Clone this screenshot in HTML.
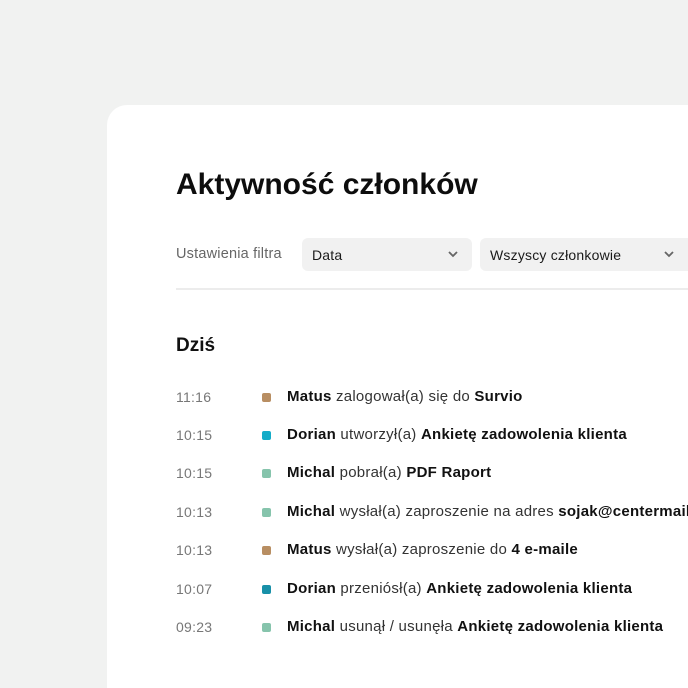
<!DOCTYPE html>
<html><head><meta charset="utf-8"><style>
*{margin:0;padding:0;box-sizing:border-box}
html,body{width:688px;height:688px;overflow:hidden}
body{background:#f1f2f1;font-family:"Liberation Sans",sans-serif;position:relative}
.card{position:absolute;left:107px;top:105px;width:581px;height:583px;background:#fff;border-radius:20px 0 0 0}
.t{position:absolute;white-space:nowrap}
h1{position:absolute;left:176px;top:168px;font-size:30px;font-weight:bold;color:#0d0d0d}
.sel{position:absolute;top:238px;height:33px;background:#f1f1f1;border-radius:6px;font-size:14px;color:#1a1a1a;padding:9px 0 0 10px;letter-spacing:0.2px;overflow:hidden}
.sel svg{position:absolute;right:14px;top:13px}
.hr{position:absolute;left:176px;top:288px;width:512px;height:2px;background:#ececec}
.clip{position:absolute;left:0;top:0;width:688px;height:688px;overflow:hidden}
.row{position:absolute;left:176px;width:512px;overflow:hidden;font-size:15px;color:#333;white-space:nowrap;height:20px;line-height:20px;letter-spacing:0.25px}
.row .tm{position:absolute;left:0;top:0;color:#777;font-size:14px;line-height:20px}
.row .d{position:absolute;left:86px;top:6px;width:9px;height:9px;border-radius:2px}
.row .x{position:absolute;left:111px;top:0}
b{color:#111}
</style></head><body>
<div class="card"></div>
<h1>Aktywność członków</h1>
<div class="t" style="left:176px;top:246px;font-size:14.5px;color:#666;letter-spacing:0.2px">Ustawienia filtra</div>
<div class="sel" style="left:302px;width:170px">Data<svg width="10" height="7" viewBox="0 0 10 7"><path d="M1 1l4 4 4-4" stroke="#666" stroke-width="1.8" fill="none"/></svg></div>
<div class="sel" style="left:480px;width:208px;border-radius:6px 0 0 6px">Wszyscy członkowie<svg width="10" height="7" viewBox="0 0 10 7"><path d="M1 1l4 4 4-4" stroke="#666" stroke-width="1.8" fill="none"/></svg></div>
<div class="hr"></div>
<div class="t" style="left:176px;top:335px;font-size:19px;font-weight:bold;color:#111">Dziś</div>
<div class="clip">
<div class="row" style="top:387px"><span class="tm">11:16</span><span class="d" style="background:#b88e62"></span><span class="x"><b>Matus</b> zalogował(a) się do <b>Survio</b></span></div>
<div class="row" style="top:425px"><span class="tm">10:15</span><span class="d" style="background:#14acc8"></span><span class="x"><b>Dorian</b> utworzył(a) <b>Ankietę zadowolenia klienta</b></span></div>
<div class="row" style="top:463px"><span class="tm">10:15</span><span class="d" style="background:#86c4ac"></span><span class="x"><b>Michal</b> pobrał(a) <b>PDF Raport</b></span></div>
<div class="row" style="top:502px"><span class="tm">10:13</span><span class="d" style="background:#86c4ac"></span><span class="x"><b>Michal</b> wysłał(a) zaproszenie na adres <b>sojak@centermail.com</b></span></div>
<div class="row" style="top:540px"><span class="tm">10:13</span><span class="d" style="background:#b88e62"></span><span class="x"><b>Matus</b> wysłał(a) zaproszenie do <b>4 e-maile</b></span></div>
<div class="row" style="top:579px"><span class="tm">10:07</span><span class="d" style="background:#1890a8"></span><span class="x"><b>Dorian</b> przeniósł(a) <b>Ankietę zadowolenia klienta</b></span></div>
<div class="row" style="top:617px"><span class="tm">09:23</span><span class="d" style="background:#86c4ac"></span><span class="x"><b>Michal</b> usunął / usunęła <b>Ankietę zadowolenia klienta</b></span></div>
</div>
</body></html>
